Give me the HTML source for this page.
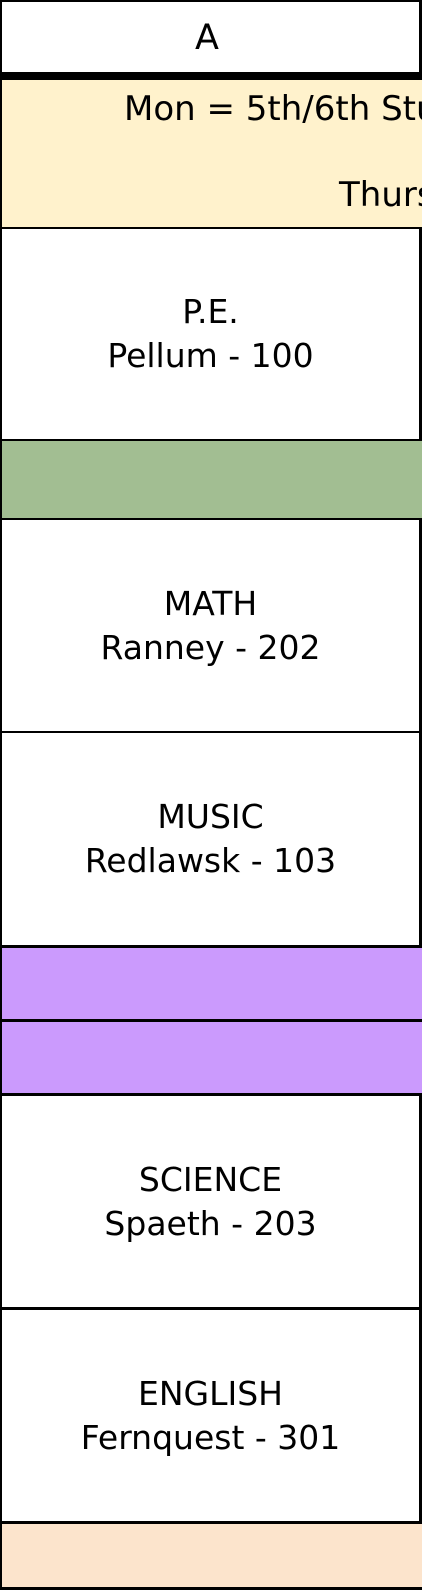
<!DOCTYPE html>
<html><head><style>
html,body{margin:0;padding:0;background:#000;}
body{width:422px;height:1590px;position:relative;overflow:hidden;font-family:"DejaVu Sans","Liberation Sans",sans-serif;color:#000;}
.r{position:absolute;left:2px;}
.w{background:#fff;width:417px;}
.c{width:420px;}
.t{position:absolute;left:0;width:417px;text-align:center;font-size:33px;line-height:44px;}
.abs{position:absolute;font-size:34px;white-space:nowrap;}
</style></head><body>
<div class="r w" style="top:2px;height:70px;"><div class="abs" style="left:193px;top:16px;font-size:35px;">A</div></div>
<div class="r c" style="top:80px;height:147px;background:#fff2cc;">
<div class="abs" style="left:122px;top:9px;">Mon = 5th/6th Stu</div>
<div class="abs" style="left:337px;top:95px;">Thurs</div>
</div>
<div class="r w" style="top:229px;height:210px;"><div class="t" style="top:61px;">P.E.<br>Pellum - 100</div></div>
<div class="r c" style="top:441px;height:77px;background:#a2be92;"></div>
<div class="r w" style="top:520px;height:211px;"><div class="t" style="top:62px;">MATH<br>Ranney - 202</div></div>
<div class="r w" style="top:733px;height:212px;"><div class="t" style="top:62px;">MUSIC<br>Redlawsk - 103</div></div>
<div class="r c" style="top:948px;height:71px;background:#cb9afd;"></div>
<div class="r c" style="top:1022px;height:71px;background:#cb9afd;"></div>
<div class="r w" style="top:1096px;height:211px;"><div class="t" style="top:62px;">SCIENCE<br>Spaeth - 203</div></div>
<div class="r w" style="top:1310px;height:211px;"><div class="t" style="top:62px;">ENGLISH<br>Fernquest - 301</div></div>
<div class="r c" style="top:1524px;height:63px;background:#fce4cc;"></div>
</body></html>
